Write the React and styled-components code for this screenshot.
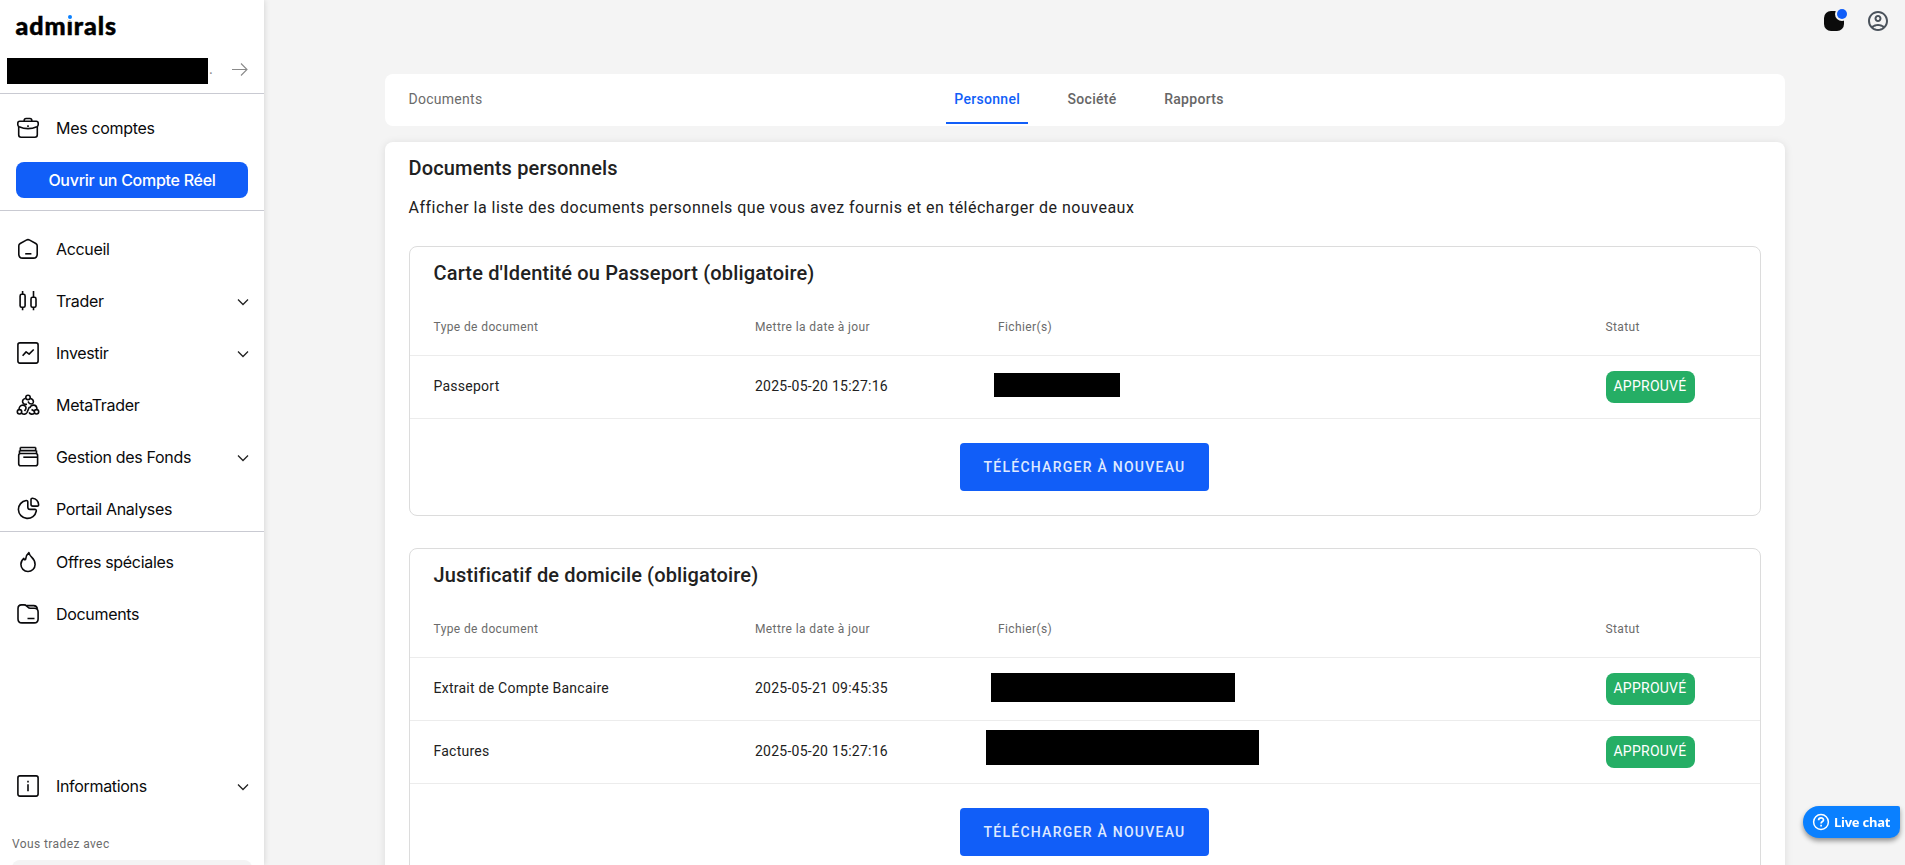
import React, { useState } from "react"
import styled, { createGlobalStyle, css } from "styled-components"
import { MdOutlineAccountCircle } from "react-icons/md"

const GlobalStyle = createGlobalStyle`
  * {
    box-sizing: border-box;
  }

  body {
    margin: 0;
    overflow: hidden;
    background: #f4f4f4;
    color: #212121;
    font-family: Roboto, "Liberation Sans", sans-serif;
  }

  button {
    border: 0;
    font-family: inherit;
    cursor: pointer;
  }
`

const Page = styled.div`
  display: flex;
  height: 100vh;
  overflow: hidden;
`

const Sidebar = styled.aside`
  display: flex;
  flex-direction: column;
  flex: none;
  width: 264px;
  height: 100%;
  background: white;
  box-shadow: 0 0 6px rgba(0, 0, 0, 0.15);
  color: #0a0a0c;
  font-family: Inter, "Liberation Sans", sans-serif;
`

const SidebarHeader = styled.div`
  height: 94px;
  border-bottom: 1px solid #c9cad2;
`

const Logo = styled.div`
  height: 58px;
  padding: 8px 0 0 15.5px;
  color: black;
  font: 900 25px/34px Lato, sans-serif;
  letter-spacing: 0.9px;
  -webkit-text-stroke: 0.5px black;
`

const LogoI = styled.span`
  position: relative;

  /* blue dot painted over the one of the letter */
  &::after {
    content: "";
    position: absolute;
    top: 5px;
    left: 50%;
    width: 4px;
    height: 4px;
    border-radius: 50%;
    background: #0a80ff;
    box-shadow: 0 0 0 1.5px white;
    transform: translateX(-50%);
  }
`

const Account = styled.div`
  display: flex;
  align-items: flex-start;
  padding-left: 7px;

  .dot {
    width: 24px;
    padding-left: 1px;
    color: #8a8a8a;
    font-size: 13px;
    line-height: 22px;
  }

  svg {
    margin-top: 3px;
  }
`

const Redaction = styled.div`
  flex: none;
  width: ${({ $width }) => $width}px;
  height: ${({ $height }) => $height}px;
  background: black;
`

const NavSection = styled.nav`
  display: flex;
  flex-direction: column;
  flex: none;
  gap: 8px;
  padding: ${({ $top = 0 }) => $top}px 16px 0;

  ${({ $height }) =>
    $height &&
    css`
      height: ${$height}px;
      border-bottom: 1px solid #c9cad2;
    `}
`

const NavRow = styled.a`
  display: flex;
  flex: none;
  align-items: center;
  height: 44px;
  font-size: 16px;
  letter-spacing: -0.32px;
  cursor: pointer;

  .nav-icon {
    margin-right: 16px;
  }

  .nav-label {
    flex: 1;
  }

  .chevron {
    margin-top: 1px;
    margin-right: -1px;
  }
`

const OpenAccountButton = styled.button`
  flex: none;
  height: 36px;
  margin-top: 4px;
  border-radius: 8px;
  background: #115ef8;
  color: white;
  font-size: 16px;
  font-weight: 500;
  letter-spacing: -0.27px;
`

const SidebarFooter = styled.div`
  flex: none;
  height: 101px;
  margin-top: auto;
  overflow: hidden;

  .trading-with {
    padding: 28px 12px 0;
    color: #6b6b6b;
    font: 400 12px/16px Roboto, sans-serif;
    letter-spacing: 0.4px;
  }

  .entity {
    height: 44px;
    margin: 8px 12px 0;
    border-radius: 8px;
    background: #f4f4f4;
  }
`

const Main = styled.main`
  flex: 1;
  padding-left: 120.5px;
`

const TopBar = styled.header`
  display: flex;
  justify-content: flex-end;
  gap: 22px;
  height: 74px;
  padding: 9px 15px 0 0;
  color: #4a525b;
`

const Notification = styled.div`
  position: relative;
  width: 20px;
  height: 20px;
  margin-top: 2px;
  border-radius: 7px;
  background: #0b0b0b;

  &::after {
    content: "";
    position: absolute;
    top: -2px;
    right: -3px;
    width: 10px;
    height: 10px;
    border-radius: 50%;
    background: #115ef8;
    box-shadow: 0 0 0 2px #f4f4f4;
  }
`

const TabBar = styled.div`
  display: grid;
  grid-template-columns: 1fr auto 1fr;
  width: 1400px;
  height: 52px;
  padding: 0 24px;
  border-radius: 8px;
  background: white;

  .breadcrumb {
    color: #6b6b6b;
    font-size: 14px;
    line-height: 50px;
    letter-spacing: 0.27px;
  }
`

const Tabs = styled.div`
  display: flex;
  gap: 31.5px;
  padding-left: 9px;
`

const Tab = styled.button`
  height: 50px;
  padding: 2px 8px 0;
  border-bottom: 2px solid ${({ $active }) => ($active ? "#115ef8" : "transparent")};
  background: none;
  color: ${({ $active }) => ($active ? "#115ef8" : "#666")};
  font-size: 14px;
  font-weight: 500;
  letter-spacing: 0.3px;
`

const Content = styled.section`
  width: 1400px;
  height: 900px;
  margin-top: 16px;
  padding: 12px 24px;
  border-radius: 8px;
  background: white;
  box-shadow: 0 1px 8px rgba(0, 0, 0, 0.1);
`

const Title = styled.h2`
  margin: 0;
  font-size: 20px;
  font-weight: 500;
  line-height: 28px;
  letter-spacing: 0.15px;
`

const Description = styled.p`
  margin: 14px 0 26px;
  font-size: 16px;
  line-height: 24px;
  letter-spacing: 0.5px;
`

const DocumentCard = styled.div`
  width: 1352px;
  margin-bottom: 32px;
  border: 1px solid #dcdcdc;
  border-radius: 8px;

  h2 {
    padding: 12px 24px 11px;
  }
`

const Row = styled.div`
  display: grid;
  grid-template-columns: 321.5px 243px 607.5px auto;
  align-items: center;
  justify-content: start;
  height: 63px;
  padding-left: 24px;
  border-bottom: 1px solid #ececec;
  font-size: 14px;
  letter-spacing: 0.25px;

  .cell {
    padding-bottom: 2px;
  }

  &.head {
    height: 58px;
    color: #6b6b6b;
    font-size: 12px;
    letter-spacing: 0.39px;
  }
`

const FileCell = styled.div`
  align-self: start;
  padding-top: ${({ $top }) => $top}px;
  margin-left: ${({ $shift }) => $shift}px;
`

const Badge = styled.span`
  display: inline-block;
  width: 89px;
  height: 32px;
  border-radius: 8px;
  background: #25ae65;
  color: white;
  font-size: 14px;
  line-height: 30px;
  text-align: center;
  letter-spacing: 0.25px;
`

const CardActions = styled.div`
  display: flex;
  justify-content: center;
  padding: 24px 0;
`

const UploadButton = styled.button`
  width: 249px;
  height: 48px;
  border-radius: 4px;
  background: #115ef8;
  color: #dfe9ff;
  font-size: 14px;
  font-weight: 500;
  letter-spacing: 1.25px;
`

const LiveChat = styled.button`
  position: fixed;
  right: 5px;
  bottom: 27px;
  display: flex;
  align-items: center;
  gap: 4px;
  width: 97px;
  height: 32px;
  padding: 0 0 0 9px;
  border-radius: 16px 2px 10px 16px;
  background: #0a80ff;
  box-shadow: 0 3px 5px rgba(0, 0, 0, 0.4);
  color: white;
  font: 700 13px/32px "Noto Sans", sans-serif;
  letter-spacing: -0.25px;
  white-space: nowrap;
`

const icons = {
  briefcase: (
    <>
      <path d="M8.2 5.2V4.4c0-1.1.8-1.9 1.9-1.9h3.8c1.1 0 1.9.8 1.9 1.9v.8" />
      <path d="M3.8 5.3h16.4c1.2 0 2 .8 2 2v1.5c0 .9-.5 1.5-1.3 1.9-5.7 2.5-12.1 2.5-17.8 0-.8-.4-1.3-1-1.3-1.9V7.3c0-1.2.8-2 2-2z" />
      <path d="M2.7 10.8v8c0 1.4.9 2.4 2.4 2.4h13.8c1.5 0 2.4-1 2.4-2.4v-8M12 9.2v1.8" />
    </>
  ),
  home: (
    <>
      <path d="M10.3 3.1 4.2 6.5c-.9.5-1.4 1.3-1.4 2.3v8.4c0 2.3 1.5 3.9 3.9 3.9h10.6c2.4 0 3.9-1.6 3.9-3.9V8.8c0-1-.5-1.8-1.4-2.3l-6.1-3.4c-1.1-.6-2.3-.6-3.4 0z" />
      <path d="M9.2 16.8h6.2" />
    </>
  ),
  candles: (
    <>
      <rect x="4.1" y="5.3" width="5" height="13" rx="1.6" />
      <rect x="15" y="8.3" width="5" height="10" rx="1.6" />
      <path d="M6.6 2v3.3M6.6 18.3v3M17.5 2v6.3M17.5 18.3v3" />
    </>
  ),
  chart: (
    <>
      <rect x="1.9" y="1.9" width="20.2" height="20.2" rx="2" />
      <path d="m6.6 14.8 3.5-3.9 3 2.2 4.6-4.6" />
    </>
  ),
  network: (
    <>
      <circle cx="12" cy="4.4" r="2.2" />
      <circle cx="3.5" cy="18.8" r="2.2" />
      <circle cx="20.5" cy="18.8" r="2.2" />
      <path d="M9.6 5.2C7.2 6 6.3 8 6.7 9.6c.5 1.7 2.2 2 4.3 1.6M14.3 5.2c2.5.9 3.4 3 2.9 4.5-.5 1.2-2.3 1.4-3.7.9L12 8.5" />
      <path d="M3 16.5c0-2.4 1.5-4.4 3.7-4.4 2.6 0 4 2.2 3 4.2L8.5 18M5.7 20.3c1.9 1.4 4.3 1.1 5.3-.8l2.3-5.4" />
      <path d="M21 16.5c0-2.4-1.3-4.4-3.6-4.4-2 0-3.2 1.5-3.7 3M18.3 20.3c-1.9 1.4-4.4 1-5.2-.9M15.5 16.5l2.7 1.5" />
    </>
  ),
  funds: (
    <>
      <path d="M4.3 2.5h15.4M4.3 2.5v3M19.7 2.5v3M3.5 5.6h17M3.5 5.6v2.9M20.5 5.6v2.9" />
      <rect x="2.7" y="8.5" width="18.9" height="12.3" rx="2" />
      <path d="M7.3 12.2H21" />
    </>
  ),
  pie: (
    <>
      <path d="M10.2 3.5A9 9 0 1 0 20.3 14c.1-1-.5-1.6-1.4-1.6H14c-1.5 0-2.2-.8-2.2-2.2V5c0-1-.6-1.6-1.6-1.5z" />
      <path d="M15 2.7v4.6c0 1.1.7 1.8 1.8 1.8h4.5c.9 0 1.4-.6 1.3-1.5a7 7 0 0 0-6.1-6.3c-.9-.1-1.5.5-1.5 1.4z" />
    </>
  ),
  flame: (
    <path d="M12.9 2.6c-2.2 1.9-3.1 4-3.2 6.3 0 .9-1.1 1.2-1.5.4l-.4-.9c-1.9 1.6-2.9 3.6-2.9 5.9a7.1 7.1 0 0 0 14.2.2c0-3.3-1.4-5.4-3.5-7.3-1.3-1.2-2.2-2.5-2.7-4.6z" />
  ),
  folder: (
    <>
      <path d="M2 6.7c0-2.4 1.3-3.8 3.5-3.8H8c1.2 0 2 .3 2.8 1.2L12 5.3c.6.7 1.3 1 2.2 1h4.2c2.4 0 3.7 1.4 3.7 3.7v7c0 2.4-1.4 3.9-3.9 3.9H5.9C3.4 20.9 2 19.4 2 17z" />
      <path d="M11 3.6h6.7c2 0 3.3 1 3.7 3.3M11.5 16.5h7" />
    </>
  ),
  info: (
    <>
      <rect x="1.9" y="1.9" width="20.2" height="20.2" rx="2" />
      <path d="M12 10.3v7M12 6.7v1.8" />
    </>
  ),
}

const NavIcon = ({ name }) => (
  <svg
    className="nav-icon"
    width="24"
    height="24"
    viewBox="0 0 24 24"
    fill="none"
    stroke="#0a0a0c"
    strokeWidth="1.6"
    strokeLinejoin="round"
  >
    {icons[name]}
  </svg>
)

const Chevron = () => (
  <svg className="chevron" width="12" height="12" viewBox="0 0 12 12" fill="none" stroke="#222" strokeWidth="1.3">
    <path d="m1 3.5 5 5 5-5" />
  </svg>
)

const NavItem = ({ icon, label, expandable }) => (
  <NavRow>
    <NavIcon name={icon} />
    <span className="nav-label">{label}</span>
    {expandable && <Chevron />}
  </NavRow>
)

const documentGroups = [
  {
    title: "Carte d'Identité ou Passeport (obligatoire)",
    documents: [
      { type: "Passeport", date: "2025-05-20 15:27:16", file: { width: 126, height: 24, top: 16.5, shift: -4 } },
    ],
  },
  {
    title: "Justificatif de domicile (obligatoire)",
    documents: [
      {
        type: "Extrait de Compte Bancaire",
        date: "2025-05-21 09:45:35",
        file: { width: 244, height: 29, top: 15, shift: -7 },
      },
      { type: "Factures", date: "2025-05-20 15:27:16", file: { width: 273, height: 35, top: 9, shift: -12 } },
    ],
  },
]

const DocumentGroup = ({ title, documents }) => (
  <DocumentCard>
    <Title>{title}</Title>
    <Row className="head">
      <div>Type de document</div>
      <div>Mettre la date à jour</div>
      <div>Fichier(s)</div>
      <div>Statut</div>
    </Row>
    {documents.map(({ type, date, file }) => (
      <Row key={type}>
        <div className="cell">{type}</div>
        <div className="cell">{date}</div>
        <FileCell $top={file.top} $shift={file.shift}>
          <Redaction $width={file.width} $height={file.height} />
        </FileCell>
        <Badge>APPROUVÉ</Badge>
      </Row>
    ))}
    <CardActions>
      <UploadButton>TÉLÉCHARGER À NOUVEAU</UploadButton>
    </CardActions>
  </DocumentCard>
)

const tabs = ["Personnel", "Société", "Rapports"]

const App = () => {
  const [activeTab, setActiveTab] = useState(tabs[0])

  return (
    <Page>
      <GlobalStyle />
      <Sidebar>
        <SidebarHeader>
          <Logo>
            adm<LogoI>i</LogoI>rals
          </Logo>
          <Account>
            <Redaction $width={201} $height={26} />
            <span className="dot">.</span>
            <svg width="16" height="16" viewBox="0 0 16 16" fill="none" stroke="#8a8a8a" strokeWidth="1.1">
              <path d="M0 8.5h15M9 2.5l6 6-6 6" />
            </svg>
          </Account>
        </SidebarHeader>
        <NavSection $top={12} $height={117}>
          <NavItem icon="briefcase" label="Mes comptes" />
          <OpenAccountButton>Ouvrir un Compte Réel</OpenAccountButton>
        </NavSection>
        <NavSection $top={16} $height={321}>
          <NavItem icon="home" label="Accueil" />
          <NavItem icon="candles" label="Trader" expandable />
          <NavItem icon="chart" label="Investir" expandable />
          <NavItem icon="network" label="MetaTrader" />
          <NavItem icon="funds" label="Gestion des Fonds" expandable />
          <NavItem icon="pie" label="Portail Analyses" />
        </NavSection>
        <NavSection $top={8}>
          <NavItem icon="flame" label="Offres spéciales" />
          <NavItem icon="folder" label="Documents" />
        </NavSection>
        <SidebarFooter>
          <NavSection>
            <NavItem icon="info" label="Informations" expandable />
          </NavSection>
          <div className="trading-with">Vous tradez avec</div>
          <div className="entity" />
        </SidebarFooter>
      </Sidebar>
      <Main>
        <TopBar>
          <Notification />
          <MdOutlineAccountCircle size={24} />
        </TopBar>
        <TabBar>
          <span className="breadcrumb">Documents</span>
          <Tabs>
            {tabs.map((tab) => (
              <Tab key={tab} $active={tab === activeTab} onClick={() => setActiveTab(tab)}>
                {tab}
              </Tab>
            ))}
          </Tabs>
        </TabBar>
        <Content>
          <Title>Documents personnels</Title>
          <Description>
            Afficher la liste des documents personnels que vous avez fournis et en télécharger de nouveaux
          </Description>
          {documentGroups.map((group) => (
            <DocumentGroup key={group.title} {...group} />
          ))}
        </Content>
      </Main>
      <LiveChat>
        <svg width="18" height="18" viewBox="0 0 18 18" fill="none" stroke="white" strokeWidth="1.5">
          <circle cx="9" cy="9" r="7.4" />
          <path d="M6.6 7.2c0-3.2 4.9-3 4.9-.3 0 1.6-2.4 1.7-2.4 3.5M9.1 11.8v1.7" strokeWidth="1.7" />
        </svg>
        Live chat
      </LiveChat>
    </Page>
  )
}

export default App
